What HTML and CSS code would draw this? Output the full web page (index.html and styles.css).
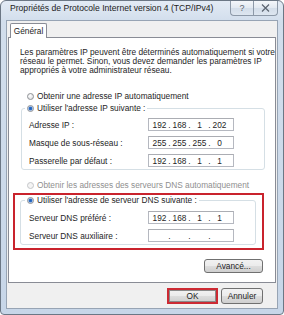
FILE: index.html
```html
<!DOCTYPE html>
<html lang="fr">
  <head>
    <meta charset="UTF-8" />
    <title>Propriétés de Protocole Internet version 4 (TCP/IPv4)</title>
    <link rel="stylesheet" href="styles.css">
  </head>

  <body>
    <div class="window">
      <!-- Barre de titre -->
      <div class="titlebar">
        <span class="title">Propriétés de Protocole Internet version 4 (TCP/IPv4)</span>
        <div class="caption-btns">
          <span class="cap-btn help">?</span>
          <span class="cap-btn close">
            <svg width="9" height="8" viewBox="0 0 9 8">
              <path d="M1 0.5 L8 7.5 M8 0.5 L1 7.5" stroke="#5b6470" stroke-width="1.2" fill="none" />
            </svg>
          </span>
        </div>
      </div>

      <div class="client">
        <div class="tabs"><span class="tab">Général</span></div>

        <div class="panel">
          <p class="intro">Les paramètres IP peuvent être déterminés automatiquement si votre<br>réseau le permet. Sinon, vous devez demander les paramètres IP<br>appropriés à votre administrateur réseau.</p>

          <div class="radio first"><span class="dot"></span>Obtenir une adresse IP automatiquement</div>

          <fieldset class="group">
            <legend><span class="radio"><span class="dot on"></span>Utiliser l'adresse IP suivante :</span></legend>
            <div class="row">
              <span class="lbl">Adresse IP :</span>
              <span class="ip"><i>192</i><b>.</b><i>168</i><b>.</b><i>1</i><b>.</b><i>202</i></span>
            </div>
            <div class="row">
              <span class="lbl">Masque de sous-réseau :</span>
              <span class="ip"><i>255</i><b>.</b><i>255</i><b>.</b><i>255</i><b>.</b><i>0</i></span>
            </div>
            <div class="row">
              <span class="lbl">Passerelle par défaut :</span>
              <span class="ip"><i>192</i><b>.</b><i>168</i><b>.</b><i>1</i><b>.</b><i>1</i></span>
            </div>
          </fieldset>

          <div class="radio disabled"><span class="dot"></span>Obtenir les adresses des serveurs DNS automatiquement</div>

          <!-- Zone DNS encadrée en rouge -->
          <div class="highlight">
            <fieldset class="group dns">
              <legend><span class="radio"><span class="dot on"></span>Utiliser l'adresse de serveur DNS suivante :</span></legend>
              <div class="row">
                <span class="lbl">Serveur DNS préféré :</span>
                <span class="ip"><i>192</i><b>.</b><i>168</i><b>.</b><i>1</i><b>.</b><i>1</i></span>
              </div>
              <div class="row">
                <span class="lbl">Serveur DNS auxiliaire :</span>
                <span class="ip"><i></i><b>.</b><i></i><b>.</b><i></i><b>.</b><i></i></span>
              </div>
            </fieldset>
          </div>

          <button class="btn advanced">Avancé...</button>
        </div>

        <div class="footer">
          <button class="btn ok">OK</button>
          <button class="btn cancel">Annuler</button>
        </div>
      </div>
    </div>
  </body>
</html>
```

FILE: styles.css
```css
body {
  margin: 0;
  width: 284px;
  height: 315px;
  background: #fff;
  font-family: "Liberation Sans", Arial, sans-serif;
  font-size: 8.3px;
  color: #1e1e1e;
}

.window {
  box-sizing: border-box;
  width: 284px;
  height: 315px;
  border: 1px solid #6b7785;
  border-radius: 6px 6px 4px 4px;
  background: linear-gradient(180deg, #e3ebf5 0, #d2deec 20px, #c7d6e8 100%);
  padding: 0 5px 5px;
  display: flex;
  flex-direction: column;
}

/* Barre de titre */
.titlebar {
  height: 19px;
  display: flex;
  align-items: flex-start;
  flex: none;
}

.title {
  padding: 3px 0 0 4px;
  line-height: 9px;
  font-size: 8.6px;
  white-space: nowrap;
  color: #222;
}

.caption-btns {
  margin-left: auto;
  margin-right: 0;
  display: flex;
}

.cap-btn {
  box-sizing: border-box;
  height: 15px;
  display: flex;
  align-items: center;
  justify-content: center;
  border: 1px solid #8d99a8;
  border-top: none;
  background: linear-gradient(180deg, #f3f6fa 0%, #e2e9f1 50%, #d3dde9 51%, #dde6f0 100%);
  color: #5b6470;
  font-size: 9px;
}

.help {
  width: 23px;
  border-radius: 0 0 0 4px;
  border-right: none;
}

.close {
  width: 25px;
  border-radius: 0 0 4px 0;
}

/* Zone client */
.client {
  flex: 1;
  background: #f0f0f0;
  border: 1px solid #97a4b4;
  padding: 2px 1px 0 1px;
  display: flex;
  flex-direction: column;
}

.tabs {
  display: flex;
  padding-left: 2px;
}

.tab {
  position: relative;
  box-sizing: border-box;
  width: 37px;
  height: 15px;
  margin-bottom: -1px;
  padding-top: 2px;
  line-height: 10px;
  text-align: center;
  background: #fff;
  border: 1px solid #898c95;
  border-bottom: none;
  border-radius: 2px 2px 0 0;
}

.panel {
  background: #fff;
  border: 1px solid #898c95;
  padding: 10px 10px 9px 12px;
  display: flex;
  flex-direction: column;
}

.intro {
  margin: 0 0 0 -1px;
  line-height: 9px;
  white-space: nowrap;
}

.radio {
  display: flex;
  align-items: center;
  height: 10px;
  line-height: 10px;
  white-space: nowrap;
}

.radio.first {
  margin-top: 16px;
  padding-left: 6px;
}

.radio.disabled {
  margin-top: 10px;
  padding-left: 6px;
  color: #8f8f8f;
}

.dot {
  box-sizing: border-box;
  width: 7px;
  height: 7px;
  margin-right: 3px;
  border-radius: 50%;
  border: 1px solid #8e9195;
  background: radial-gradient(circle at 40% 35%, #ffffff, #d6d8db);
  flex: none;
}

.dot.on {
  background: radial-gradient(circle, #1f5fb8 0, #2f6fc6 1.4px, #b9d0ee 2.2px, #eef3f9 100%);
}

.radio.disabled .dot {
  border-color: #c4c6c9;
  background: #f4f4f4;
}

.group {
  margin: 2px 0 0;
  padding: 0 0 2px 3px;
  border: 1px solid #d5dfe5;
  border-radius: 3px;
  min-width: 0;
}

.group legend {
  padding: 0 2px;
}

.row {
  display: flex;
  align-items: center;
  height: 13px;
  margin-top: 5px;
  padding-left: 4px;
}

.lbl {
  width: 119px;
  white-space: nowrap;
}

.ip {
  box-sizing: border-box;
  width: 86px;
  height: 13px;
  padding-left: 3px;
  display: flex;
  align-items: center;
  border: 1px solid #b5b8c0;
  border-top-color: #abadb3;
}

.ip i {
  font-style: normal;
  width: 15px;
  text-align: center;
}

.ip b {
  font-weight: normal;
  width: 5px;
  text-align: center;
}

/* Encadrement rouge */
.highlight {
  margin: 3px 1px 0 -8px;
  border: 2px solid #c9232d;
}

.group.dns {
  margin: 0 6px 3px 5px;
  padding-left: 4px;
}

.group.dns .row:first-of-type {
  margin-top: 6px;
}

.btn {
  box-sizing: border-box;
  height: 14px;
  padding: 0;
  border: 1px solid #707070;
  border-radius: 3px;
  background: linear-gradient(180deg, #f2f2f2 0%, #ebebeb 50%, #dddddd 51%, #cfcfcf 100%);
  font-family: inherit;
  font-size: 8.3px;
  color: #1e1e1e;
}

.advanced {
  align-self: flex-end;
  width: 59px;
  margin: 9px 2px 0 0;
}

.footer {
  display: flex;
  justify-content: flex-end;
  gap: 3px;
  margin-top: 5px;
  padding-right: 13px;
}

.footer .btn {
  height: 16px;
}

.ok {
  width: 51px;
  border: 2px solid #cc2a33;
  border-radius: 0;
  box-shadow: inset 0 0 0 1px #8a8a8a;
}

.cancel {
  width: 42px;
}
```
